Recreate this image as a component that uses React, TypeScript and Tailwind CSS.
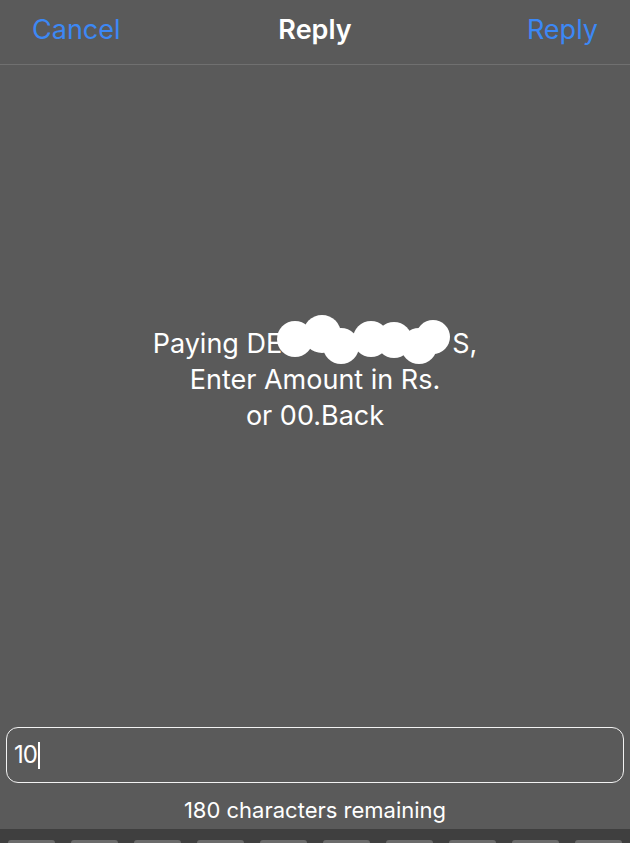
import React from 'react';

const font = { fontFamily: 'Inter, "Noto Sans", sans-serif' };

// Redaction blobs over the payee name
const blobs = [
  { x: 295, y: 339, r: 18 },
  { x: 322, y: 334, r: 19 },
  { x: 341, y: 346, r: 18 },
  { x: 371, y: 339, r: 18 },
  { x: 394, y: 340, r: 18 },
  { x: 419, y: 346, r: 18 },
  { x: 433, y: 337, r: 17 },
];

function Redaction() {
  return (
    <svg className="pointer-events-none absolute left-0 top-0" width={630} height={843}>
      {blobs.map((b, i) => (
        <circle key={i} cx={b.x} cy={b.y} r={b.r} fill="#ffffff" />
      ))}
    </svg>
  );
}

export default function App() {
  const keys = Array.from({ length: 10 });

  return (
    <div
      className="relative flex h-[843px] w-[630px] flex-col overflow-hidden bg-[#5a5a5a] text-white"
      style={font}
    >
      <header className="grid h-[65px] shrink-0 grid-cols-3 items-center border-b border-[#707070] px-[32px] pb-[4px]">
        <span className="text-[27px] text-[#3c88f5]">Cancel</span>
        <span className="text-center text-[27px] font-semibold">Reply</span>
        <span className="text-right text-[27px] text-[#3c88f5]">Reply</span>
      </header>

      <main className="flex-1">
        <div className="pt-[261px] text-center text-[27px] leading-[36px]">
          <p>
            Paying DE<span className="inline-block w-[170px]" />S,
          </p>
          <p>Enter Amount in Rs.</p>
          <p>or 00.Back</p>
        </div>
      </main>

      <div className="shrink-0 px-[6px]">
        <div className="flex h-[56px] items-center rounded-[12px] border-[1.5px] border-[#f2f2f2] px-[7px]">
          <span className="text-[24px] tracking-[-1px]">10</span>
          <span className="ml-[1px] h-[27px] w-[2px] bg-white" />
        </div>
      </div>

      <p className="shrink-0 pb-[6px] pt-[14px] text-center text-[22px] leading-[26px]">
        180 characters remaining
      </p>

      <div className="flex h-[14px] shrink-0 items-end gap-[16px] bg-[#3f3f3f] px-[8px]">
        {keys.map((_, i) => (
          <div key={i} className="h-[3px] w-[47px] rounded-t-[6px] bg-[#6b6b6b]" />
        ))}
      </div>

      <Redaction />
    </div>
  );
}
